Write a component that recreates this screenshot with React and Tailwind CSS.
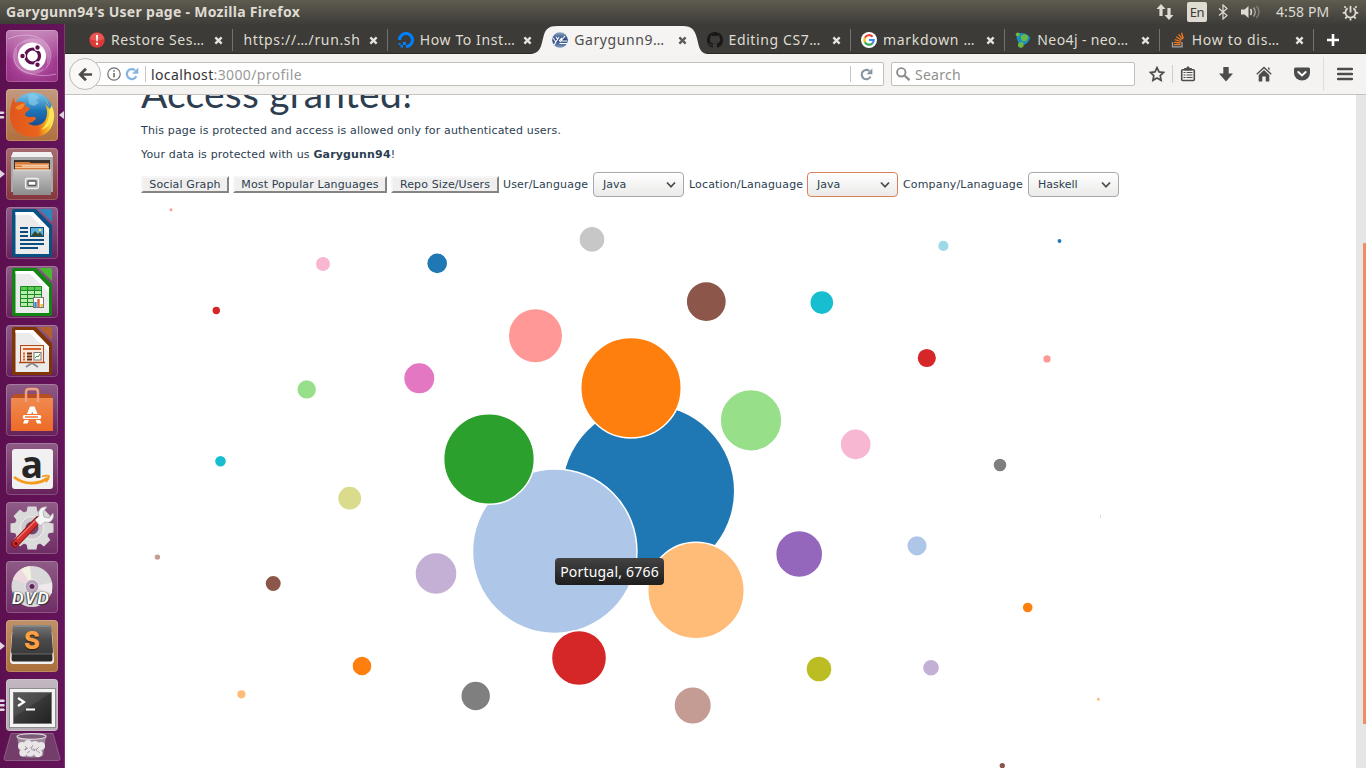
import React from "react";

const UI = "font-['Noto_Sans',sans-serif]";

/* ---------- launcher icons (52 x 52 tiles) ---------- */

const Dash = () => (
  <svg viewBox="0 0 52 52" className="size-full">
    <defs>
      <radialGradient id="dash" cx="0.5" cy="0.5" r="0.75">
        <stop offset="0" stopColor="#c676b6" />
        <stop offset="0.6" stopColor="#a23c91" />
        <stop offset="1" stopColor="#8f2a7c" />
      </radialGradient>
      <linearGradient id="dashTop" x1="0" y1="0" x2="0" y2="1">
        <stop offset="0" stopColor="#fff" stopOpacity="0.4" />
        <stop offset="1" stopColor="#fff" stopOpacity="0" />
      </linearGradient>
    </defs>
    <rect width="52" height="52" rx="4" fill="url(#dash)" />
    <rect width="52" height="30" rx="4" fill="url(#dashTop)" />
    <g fill="none" stroke="#f0d3ea" strokeOpacity="0.5" strokeWidth="1">
      <path d="M2 9C18 2 38 4 44 20c2 7 0 13-4 18" />
      <path d="M50 44C34 48 12 44 8 30c-1-7 1-12 5-16" />
    </g>
    <path d="M12 15C20 5 38 6 43 18q3 9-2 17 1-10-4-16-9-11-25-4z" fill="#fff" opacity="0.22" />
    <path d="M40 38C32 48 14 46 9 34q-3-8 2-17-1 10 4 16 9 11 25 5z" fill="#fff" opacity="0.22" />
    <circle cx="26" cy="26.500" r="14" fill="#fff" />
    <circle cx="26.500" cy="26" r="7" fill="none" stroke="#5e1050" strokeWidth="3.200" />
    <g fill="#5e1050" stroke="#fff" strokeWidth="1.200">
      <circle cx="16.500" cy="26" r="2.800" />
      <circle cx="31.500" cy="17.500" r="2.800" />
      <circle cx="31.500" cy="34.700" r="2.800" />
    </g>
  </svg>
);

const Firefox = () => (
  <svg viewBox="0 0 52 52" className="size-full">
    <defs>
      <linearGradient id="ffb" x1="0" y1="0" x2="0" y2="1">
        <stop offset="0" stopColor="#7cc9ee" />
        <stop offset="0.45" stopColor="#1e76b8" />
        <stop offset="1" stopColor="#123a7c" />
      </linearGradient>
      <linearGradient id="fff" x1="0" y1="0" x2="1" y2="0">
        <stop offset="0" stopColor="#e2571c" />
        <stop offset="0.65" stopColor="#e9641d" />
        <stop offset="0.85" stopColor="#f5b31d" />
        <stop offset="1" stopColor="#fbe14b" />
      </linearGradient>
    </defs>
    <circle cx="27" cy="23.500" r="20" fill="url(#ffb)" />
    <path d="M22 6c5-2 9 0 11 3l-3 2 3 3-5 3-5-2z" fill="#8fd0ee" opacity="0.6" />
    <path d="M8 8c0 4 1 5 2 6 3-2 7-1 9 0 0 3 2 4 5 5-1 3-5 4-5 7 1 2 4 2 7 2 3-1 4 1 4 2-2 1-3 4-8 4 5 4 12 3 16-1 4-5 4-12 1-18 5 4 9 11 8 18-1 9-10 15-20 15C13 48 4 39 4 27 4 19 6 12 8 8z" fill="url(#fff)" />
    <path d="M39 10c7 9 6 22-4 31 8-2 10-8 11-12-1 6-2 9-4 12 7-6 8-18 3-25 0 3-1 4-2 5 0-5-1-8-4-11z" fill="#fde65a" />
    <path d="M9 19c4-4 7-4 10-5-1 3-1 5-6 7z" fill="#f08a35" />
  </svg>
);

const Files = () => (
  <svg viewBox="0 0 52 52" className="size-full">
    <defs>
      <linearGradient id="cab" x1="0" y1="0" x2="0" y2="1">
        <stop offset="0" stopColor="#c6c6c6" />
        <stop offset="1" stopColor="#8c8c8c" />
      </linearGradient>
    </defs>
    <path d="M7 5h38l2 5v34H5V10z" fill="#a9a9a9" />
    <path d="M7 4h38l2 5H5z" fill="#f1f1f1" />
    <rect x="8" y="12" width="36" height="12" fill="#3c3230" />
    <path d="M9 14h14l2 1h18v8H9z" fill="#d77b3b" />
    <path d="M9 17h34M9 19.500h34" stroke="#f9c58c" strokeWidth="1.200" />
    <path d="M16 18h26" stroke="#fff5e8" strokeWidth="1" />
    <path d="M7 22h38v25H7z" fill="url(#cab)" />
    <path d="M7 22h38" stroke="#e3e3e3" />
    <rect x="19.500" y="30.500" width="13" height="10" rx="1.500" fill="#b5b5b5" stroke="#efefef" strokeWidth="1.300" />
    <rect x="22" y="33" width="8" height="4.500" rx="1" fill="#fff" stroke="#565656" strokeWidth="1.300" />
  </svg>
);

const DocShape = ({ dark, light, children }) => (
  <svg viewBox="0 0 52 52" className="size-full">
    <path d="M8 2h22l16 16.500V48q0 2-2 2H8q-2 0-2-2V4q0-2 2-2z" fill={dark} />
    <path d="M33 2h11q2 0 2 2v11z" fill={light} />
    <path d="M9.500 5h17.500L43 21.500V47H9.500z" fill="#ebebeb" />
    <path d="M9.500 5h17.500L43 21.500V27L24 8H9.500z" fill="#fff" />
    {children}
  </svg>
);

const Writer = () => (
  <DocShape dark="#0a5183" light="#2f86bd">
    <path d="M14 21h8M14 25h8M14 29h8M14 33h24M14 37h24M14 41h18" stroke="#0a4c7d" strokeWidth="2" />
    <rect x="24.500" y="20.500" width="13" height="9" fill="#5bb1dd" stroke="#0a4c7d" />
    <path d="M25 29l4-5 3 3 2-2 3 4z" fill="#35492f" />
    <circle cx="34" cy="23" r="1.300" fill="#ffe35e" />
  </DocShape>
);

const Calc = () => (
  <DocShape dark="#128512" light="#49b832">
    <rect x="14.500" y="20.500" width="21" height="20" fill="#b8ecb0" />
    <rect x="14.500" y="20.500" width="21" height="4" fill="#5bc953" />
    <path d="M14.500 20.500h21v20h-21zM14.500 24.500h21M14.500 28.500h21M14.500 32.500h21M14.500 36.500h21M21.500 20.500v20M28.500 20.500v20" fill="none" stroke="#1d8a1d" />
    <rect x="27.500" y="31.500" width="10" height="10" fill="#fff" stroke="#777" />
    <path d="M29.500 41v-5" stroke="#2a8be0" strokeWidth="2.400" />
    <path d="M32.500 41v-8" stroke="#e06030" strokeWidth="2.400" />
    <path d="M35.700 41v-3" stroke="#efc22f" strokeWidth="2.400" />
  </DocShape>
);

const Impress = () => (
  <DocShape dark="#7f3506" light="#b3602c">
    <rect x="14.500" y="20.500" width="23" height="17" fill="#fbe9de" stroke="#b04a14" />
    <path d="M17 24h18" stroke="#d2662c" strokeWidth="1.800" />
    <path d="M17 28.500h2M17 31.500h2M17 34.500h2" stroke="#d2662c" strokeWidth="2" />
    <path d="M21 28.500h5M21 31.500h5M21 34.500h5" stroke="#6b2b08" strokeWidth="2" />
    <rect x="28" y="27.500" width="7" height="7.500" fill="#fff" stroke="#777" />
    <path d="M29 33l2-2 1 1 2-3" fill="none" stroke="#32922c" />
    <path d="M13 37.500h26" stroke="#b04a14" strokeWidth="1.500" />
    <path d="M26 38l-6 4M26 38l6 4" stroke="#868686" strokeWidth="1.800" />
  </DocShape>
);

const Software = () => (
  <svg viewBox="0 0 52 52" className="size-full">
    <defs>
      <linearGradient id="bag" x1="0" y1="0" x2="0" y2="1">
        <stop offset="0" stopColor="#f08a50" />
        <stop offset="1" stopColor="#ee6a26" />
      </linearGradient>
    </defs>
    <path d="M8 10h36l3 5H5z" fill="#b84e22" />
    <path d="M5 14h42v33H5z" fill="url(#bag)" />
    <path d="M20 18V8q0-3 3-3h6q3 0 3 3v10" fill="none" stroke="#f2a27b" strokeWidth="2.400" />
    <path d="M17 39.500l7-17h4.500l7 17h-4.500l-4.700-12-4.800 12z" fill="#fff" />
    <rect x="16" y="30.500" width="20" height="5" rx="2.500" fill="#fff" stroke="#ee7434" strokeWidth="1.200" />
    <path d="M19 33h13" stroke="#ee7434" strokeWidth="1.300" />
  </svg>
);

const Amazon = () => (
  <div className="relative flex size-full items-center justify-center">
    <div className="flex h-[40px] w-[41px] items-start justify-center rounded-[3px] bg-[#f1f1f1]">
      <span className="-mt-[11px] font-['Open_Sans',sans-serif] text-[37px] font-bold leading-[51px] text-[#262626]">a</span>
    </div>
    <svg viewBox="0 0 52 52" className="absolute inset-0 size-full">
      <path d="M8 34c10 8 24 8 34 1" fill="none" stroke="#f59a1b" strokeWidth="2.800" />
      <path d="M36 33.500c3-1 5-1.500 7-.5 0 2-1 4-3 6" fill="none" stroke="#f59a1b" strokeWidth="1.800" />
    </svg>
  </div>
);

const Settings = () => (
  <svg viewBox="0 0 52 52" className="size-full">
    <g fill="#dadada">
      {[0, 45, 90, 135, 180, 225, 270, 315].map((a) => (
        <path key={a} d="M20 14l1.500-9.500h9L32 14z" transform={`rotate(${a} 26 26)`} />
      ))}
      <circle cx="26" cy="26" r="17.500" />
    </g>
    <circle cx="26" cy="26" r="11.500" fill="#cfcacf" stroke="#efefef" />
    <circle cx="26" cy="26" r="6.500" fill="#76456b" />
    <path d="M9 42L32 18" stroke="#8f1414" strokeWidth="7.500" strokeLinecap="round" />
    <path d="M9.500 41.500L31 19" stroke="#d32f2f" strokeWidth="5.500" strokeLinecap="round" />
    <path d="M11 37L29 19" stroke="#ee7a72" strokeWidth="1.200" />
    <circle cx="10" cy="41.500" r="1.500" fill="#5d0e0e" />
    <path d="M29 18l4-4c-2-5 2-10 8-9l-4 5 1 5 5 1 4-5c2 6-3 11-8 9l-5 4z" fill="#f5f5f5" stroke="#a4a4a4" strokeWidth="0.700" />
  </svg>
);

const Dvd = () => (
  <div className="relative size-full">
    <svg viewBox="0 0 52 52" className="absolute inset-0 size-full">
      <circle cx="26" cy="25.500" r="20.500" fill="#d9d9d9" />
      <path d="M26 25.500L7 18a20.500 20.500 0 0 1 8-10z" fill="#efd9df" />
      <path d="M26 25.500L15 8a20 20 0 0 1 9-3z" fill="#f3f1e2" />
      <path d="M26 25.500l20-4v11z" fill="#efe9ee" />
      <circle cx="26" cy="25.500" r="7" fill="#b7a4b8" stroke="#eee" />
      <circle cx="26" cy="25.500" r="3" fill="#5f2358" stroke="#fff" strokeWidth="0.600" />
    </svg>
    <span className="absolute left-[6px] top-[28px] font-['Liberation_Sans',sans-serif] text-[16px] font-bold italic leading-[19px] tracking-[1.5px] text-white [text-shadow:0_0_1px_#222,1px_1px_1px_#333,-1px_0_1px_#555]">
      DVD
    </span>
  </div>
);

const Sublime = () => (
  <div className="relative size-full">
    <svg viewBox="0 0 52 52" className="absolute inset-0 size-full">
      <defs>
        <linearGradient id="subl" x1="0" y1="0" x2="0" y2="1">
          <stop offset="0" stopColor="#777" />
          <stop offset="0.5" stopColor="#4a4a4a" />
          <stop offset="1" stopColor="#3c3c3c" />
        </linearGradient>
      </defs>
      <path d="M6 12L4 40q0 4 3 4h38q3 0 3-4L46 12z" fill="#f0f0f0" />
      <path d="M7 12L5.500 39q0 2.500 2 2.500h37q2 0 2-2.500L45 12z" fill="#2a2a2a" />
      <path d="M9 5h34q2 0 2.200 2L47 31q0 3-2 3H7q-2 0-2-3L6.800 7q.2-2 2.200-2z" fill="url(#subl)" />
      <path d="M8 6h36" stroke="#9c9c9c" />
      <path d="M6 34h40" stroke="#777" strokeWidth="0.800" />
    </svg>
    <span className="absolute left-[18px] top-[6px] font-['Inter',sans-serif] text-[24px] font-extrabold leading-[29px] text-[#fba043] [text-shadow:0_1px_1px_#3b1c00]">
      S
    </span>
  </div>
);

const Terminal = () => (
  <div className="flex size-full items-center justify-center pt-[5px]">
    <div className="flex h-[38px] w-[45px] items-start border-[3px] border-[#f4f4f4] bg-gradient-to-br from-[#515151] to-[#202020] outline-1 outline-[#8d8d8d]">
      <svg viewBox="0 0 39 32" className="h-[32px] w-[39px]">
        <path d="M0 0h39L0 26z" fill="#fff" opacity="0.08" />
        <rect x="0.500" y="0.500" width="38" height="31" fill="none" stroke="#777" />
        <path d="M5 6l6 4-6 4" fill="none" stroke="#fff" strokeWidth="2.200" />
        <path d="M13 17.500h9" stroke="#fff" strokeWidth="2" />
      </svg>
    </div>
  </div>
);

const Trash = () => (
  <svg viewBox="0 0 60 35" className="h-[35px] w-[60px]">
    <path d="M8 .5h42l7 25q0 2-2 2H3q-2 0-2-2z" fill="#733e6a" stroke="#8c5e85" />
    <path d="M14 3h29l-3 20q-11.500 3-23 0z" fill="#a18a9e" />
    <g fill="#e9e6e8">
      <circle cx="19" cy="13" r="4" />
      <circle cx="25" cy="11" r="4" />
      <circle cx="32" cy="12" r="4" />
      <circle cx="38" cy="13" r="4" />
      <circle cx="20" cy="20" r="3.600" />
      <circle cx="27" cy="19" r="4.500" />
      <circle cx="35" cy="20" r="4.300" />
    </g>
    <path d="M22 13l3 3M30 12l-2 4 4 2M36 14l-3 3 4 3M24 20l3-2" stroke="#a9a0a8" fill="none" />
    <ellipse cx="28.500" cy="3.500" rx="14.500" ry="2.800" fill="#7a5c77" stroke="#dcd5db" strokeWidth="1.200" />
  </svg>
);

const plain = "bg-gradient-to-b from-[#8e5b86] to-[#66215a]";

const launcher = [
  { icon: Dash, bg: "bg-[#8f2a7c]" },
  { icon: Firefox, bg: "bg-gradient-to-b from-[#c39a80] to-[#b06f3c]", marks: "two", active: true },
  { icon: Files, bg: "bg-gradient-to-b from-[#a56c72] to-[#84343c]", marks: "one" },
  { icon: Writer, bg: plain },
  { icon: Calc, bg: plain },
  { icon: Impress, bg: plain },
  { icon: Software, bg: plain },
  { icon: Amazon, bg: plain },
  { icon: Settings, bg: "bg-gradient-to-b from-[#8e5b86] to-[#702c65]" },
  { icon: Dvd, bg: "bg-gradient-to-b from-[#8e5b86] to-[#702c65]" },
  { icon: Sublime, bg: "bg-gradient-to-b from-[#c09068] to-[#ab6f3a]", marks: "one" },
  { icon: Terminal, bg: "bg-gradient-to-b from-[#c2b6c0] to-[#b9adb7]", marks: "three" },
];

const Marks = ({ kind }) => (
  <svg viewBox="0 0 5 16" className="h-[16px] w-[5px]" fill="#e0d5de">
    {kind === "one" && <path d="M0 4l5 4-5 4z" />}
    {kind === "two" && <path d="M0 4.500h3.500l1 1.200-1 1.300H0zM0 9h3.500l1 1.200-1 1.300H0z" />}
    {kind === "three" && <path d="M0 2.500h4l1 1.300L4 5H0zM0 7h4l1 1.300-1 1.200H0zM0 11.500h4l1 1.300L4 14H0z" />}
  </svg>
);

const Launcher = () => (
  <aside className="flex w-[65px] shrink-0 flex-col gap-[7px] overflow-hidden border-r border-[#7d3a72] bg-gradient-to-r from-[#5d1050] to-[#64145a] pt-[6px]">
    {launcher.map(({ icon: Icon, bg, marks, active }, i) => (
      <div key={i} className="flex h-[52px] shrink-0 items-center">
        <div className="w-[6px]">{marks && <Marks kind={marks} />}</div>
        <div className={`relative size-[52px] overflow-hidden rounded-[4px] ${bg}`}>
          <Icon />
          <div className="absolute inset-0 rounded-[4px] shadow-[inset_0_0_0_1px_rgba(255,255,255,0.2)]" />
        </div>
        {active && (
          <svg viewBox="0 0 6 10" className="h-[10px] w-[6px]" fill="#e0d5de">
            <path d="M6 1v8L1 5z" />
          </svg>
        )}
      </div>
    ))}
    <div className="-mt-[5px] pl-[3px]">
      <Trash />
    </div>
  </aside>
);

/* ---------- title bar ---------- */

const TitleBar = () => (
  <header className={`flex h-[24px] shrink-0 items-center bg-gradient-to-b from-[#5e5b50] to-[#3e3d39] pl-[6px] text-[#dfdbd2] ${UI}`}>
    <span className="whitespace-nowrap text-[14px] font-bold leading-none tracking-[0.29px]">
      Garygunn94's User page - Mozilla Firefox
    </span>
    <div className="ml-auto flex h-full items-center">
      <svg viewBox="0 0 18 18" className="h-[18px] w-[18px]" fill="#dfdbd2">
        <path d="M5 1l4.500 5H6.600v7H3.400V6H.5zM13 17l-4.500-5h2.900V5h3.200v7h2.900z" />
      </svg>
      <span className="ml-[13px] flex h-[20px] w-[20px] items-center justify-center rounded-[2px] bg-[#dfdbd2] text-[13px] leading-none tracking-[-0.3px] text-[#3c3b37]">
        En
      </span>
      <svg viewBox="0 0 10 16" className="ml-[11px] h-[16px] w-[10px]" fill="none" stroke="#dfdbd2" strokeWidth="1.200">
        <path d="M1 4.500l8 7L5 15V1l4 3.500-8 7" />
      </svg>
      <svg viewBox="0 0 20 16" className="ml-[13px] h-[16px] w-[20px]" fill="none" strokeWidth="1.500">
        <path d="M0 5.500h3.500L7.500 2v12l-4-3.500H0z" fill="#dfdbd2" />
        <path d="M9.500 5q2 3 0 6" stroke="#dfdbd2" />
        <path d="M12.500 3.500q3.500 4.500 0 9" stroke="#a3a097" />
        <path d="M15.500 2q5 6 0 12" stroke="#7f7c73" />
      </svg>
      <span className="ml-[15px] w-[54px] whitespace-nowrap text-[14px] leading-none tracking-[0.1px]">4:58 PM</span>
      <svg viewBox="0 0 18 18" className="ml-[12px] mr-[7px] h-[17px] w-[17px]" fill="none" stroke="#dfdbd2">
        <path d="M6 4.500a5.400 5.400 0 1 0 6 0" strokeWidth="1.900" />
        <path d="M9 2v7" strokeWidth="1.900" />
        <path d="M4 4L2.500 2.500M14 4l1.500-1.500M3.500 9.500H.8M14.500 9.500h2.700M5 13.500l-1.500 2M13 13.500l1.500 2M9 15v2.500" strokeWidth="1.900" />
      </svg>
    </div>
  </header>
);

/* ---------- tabs ---------- */

const RestoreIcon = () => (
  <svg viewBox="0 0 16 16" className="size-[16px]">
    <circle cx="8" cy="8" r="7.700" fill="#da3b38" />
    <path d="M1 7a7 6 0 0 1 14 0q-7 3-14 0z" fill="#ee6d68" opacity="0.600" />
    <path d="M7 3h2l-.3 6.200H7.300z" fill="#fff" />
    <circle cx="8" cy="11.700" r="1.200" fill="#fff" />
  </svg>
);
const OceanIcon = () => (
  <svg viewBox="0 0 16 16" className="size-[16px]" fill="#0080ff">
    <path d="M8 0a8 8 0 1 1 0 16v-3.100A4.900 4.900 0 1 0 3.100 8H0a8 8 0 0 1 8-8z" />
    <path d="M4.900 9.900H8V13H4.900zM2.500 13h2.400v2.400H2.500zM.6 11h1.900v2H.6z" />
  </svg>
);
const YiiIcon = () => (
  <svg viewBox="0 0 16 16" className="size-[16px]">
    <defs>
      <linearGradient id="yi" x1="0" y1="0" x2="0" y2="1">
        <stop offset="0" stopColor="#8fa5c4" />
        <stop offset="0.5" stopColor="#25437c" />
        <stop offset="1" stopColor="#7f9cc2" />
      </linearGradient>
    </defs>
    <circle cx="8" cy="8" r="7.800" fill="url(#yi)" />
    <path d="M1 6l3 4M7 5l-5 8M4 5l2 3M13 4l-5 6M7 9l3-3M9 9h6M7.500 11.500h7.500" stroke="#fff" strokeWidth="1.100" fill="none" />
  </svg>
);
const GithubIcon = () => (
  <svg viewBox="0 0 16 16" className="size-[16px]" fill="#191717">
    <path d="M8 0C3.580 0 0 3.580 0 8c0 3.540 2.290 6.530 5.470 7.590.4.070.55-.17.55-.38 0-.19-.01-.82-.01-1.490-2.010.37-2.530-.49-2.690-.94-.09-.23-.48-.94-.82-1.130-.28-.15-.68-.52-.01-.53.630-.01 1.080.58 1.230.82.72 1.210 1.870.87 2.330.66.070-.52.280-.87.510-1.070-1.780-.2-3.640-.89-3.640-3.950 0-.87.310-1.590.82-2.150-.08-.2-.36-1.020.08-2.120 0 0 .67-.21 2.200.82.640-.18 1.320-.27 2-.27s1.360.09 2 .27c1.530-1.040 2.200-.82 2.200-.82.440 1.100.16 1.920.08 2.120.51.56.82 1.270.82 2.150 0 3.070-1.870 3.750-3.650 3.950.29.25.54.73.54 1.480 0 1.070-.01 1.930-.01 2.200 0 .21.15.46.55.38A8.010 8.010 0 0 0 16 8c0-4.420-3.580-8-8-8z" />
  </svg>
);
const GoogleIcon = () => (
  <svg viewBox="0 0 16 16" className="size-[16px]" fill="none" strokeWidth="2.200">
    <circle cx="8" cy="8" r="8" fill="#fff" />
    <path d="M11.500 4.700A4.700 4.700 0 0 0 3.900 5.800" stroke="#ea4335" />
    <path d="M3.900 5.800a4.700 4.700 0 0 0 0 4.400" stroke="#fbbc05" />
    <path d="M3.900 10.200a4.700 4.700 0 0 0 7.200 1.400" stroke="#34a853" />
    <path d="M11.100 11.600A4.500 4.500 0 0 0 12.700 8H8" stroke="#4285f4" />
  </svg>
);
const NeoIcon = () => (
  <svg viewBox="0 0 16 16" className="size-[16px]">
    <path d="M2 2q7-3 12 2 2 5-5 9-7 0-7-11z" fill="#1590c4" />
    <circle cx="2.800" cy="2.500" r="2.100" fill="#6cb644" />
    <circle cx="9.500" cy="5.800" r="3.600" fill="#6cb644" />
    <circle cx="5.800" cy="12.800" r="2.900" fill="#6cb644" />
    <path d="M2.500 5q0 3 2 5M14 5q0 4-5 7" stroke="#1590c4" strokeWidth="1.800" fill="none" />
  </svg>
);
const StackIcon = () => (
  <svg viewBox="0 0 16 16" className="size-[16px]" fill="none">
    <path d="M2.500 10v4.800h9.500V10" stroke="#9fa6ab" strokeWidth="1.300" />
    <path d="M4 12.700h6.500M4.200 10.300l6.400.7M4.800 7.600l6.200 1.900M6.200 4.800l5.400 3.400M8.500 2.300l4 4.900M11.500.8l1.800 6" stroke="#f47a20" strokeWidth="1.300" />
  </svg>
);

const tabs = [
  { label: "Restore Ses…", icon: RestoreIcon, track: "tracking-[0.520px]" },
  { label: "https://…/run.sh", track: "tracking-[0.650px]" },
  { label: "How To Inst…", icon: OceanIcon, track: "tracking-[0.600px]" },
  { label: "Garygunn9…", icon: YiiIcon, track: "tracking-[0.600px]", active: true },
  { label: "Editing CS7…", icon: GithubIcon, track: "tracking-[0.600px]" },
  { label: "markdown …", icon: GoogleIcon, track: "tracking-[0.700px]" },
  { label: "Neo4j - neo…", icon: NeoIcon, track: "tracking-[0.380px]" },
  { label: "How to dis…", icon: StackIcon, track: "tracking-[0.700px]" },
];

const Close = ({ color }) => (
  <svg viewBox="0 0 10 10" className="size-[9px] shrink-0">
    <path d="M1.500 1.500l7 7M8.500 1.500l-7 7" stroke={color} strokeWidth="2.600" />
  </svg>
);

const TabStrip = () => (
  <div className={`flex h-[30px] shrink-0 border-b border-[#2b2a27] bg-[#3c3b37] pl-[14px] ${UI}`}>
    {tabs.map(({ label, icon: Icon, track, active }, i) => (
      <div key={label} className="relative h-[30px] w-[154.400px] shrink-0">
        {active && (
          <svg viewBox="0 0 174 29" className="absolute -left-[11px] top-[1px] h-[29px] w-[176px]" preserveAspectRatio="none">
            <path d="M0 29C10 28 10 20 12 13 14 4 17 1 26 1h124c9 0 12 4 14 12 2 7 2 15 10 16z" fill="#f5f4f2" />
          </svg>
        )}
        <div
          className={`relative mt-[4px] flex h-[24px] items-center pl-[10px] pr-[10px] ${
            active ? "text-[#4c4c4c]" : "text-[#dfdbd2]"
          }`}
        >
          {Icon && (
            <span className="mr-[6px] shrink-0">
              <Icon />
            </span>
          )}
          <span className={`flex-1 whitespace-nowrap text-[14px] leading-none ${track}`}>{label}</span>
          <Close color={active ? "#5b5b59" : "#e6e3dd"} />
        </div>
        {!active && i !== 2 && <span className="absolute right-0 top-[5px] h-[22px] w-px bg-[#74726d]" />}
      </div>
    ))}
    <svg viewBox="0 0 14 14" className="ml-[12px] mt-[9px] size-[14px]">
      <path d="M7 1v12M1 7h12" stroke="#fff" strokeWidth="2.600" />
    </svg>
  </div>
);

/* ---------- navigation toolbar ---------- */

const Reload = ({ color, className }) => (
  <svg viewBox="0 0 14 14" className={className}>
    <path d="M11.300 9.300A5 5 0 1 1 10 3.200" fill="none" stroke={color} strokeWidth="2.300" />
    <path d="M13.300.5v6.300H7z" fill={color} />
  </svg>
);

const Toolbar = () => (
  <div className={`flex h-[41px] shrink-0 items-center border-b border-[#c6c3bf] bg-[#f4f3f1] pl-[4px] ${UI}`}>
    <div className="z-10 flex size-[32px] shrink-0 items-center justify-center rounded-full border border-[#bdbab6] bg-[#f9f8f7]">
      <svg viewBox="0 0 16 16" className="size-[15px]" fill="none" stroke="#4c4c4c" strokeWidth="2.900">
        <path d="M15 8H3M8.500 1.800L2.300 8l6.200 6.200" />
      </svg>
    </div>
    <div className="-ml-[5px] flex h-[24px] w-[788px] shrink-0 items-center rounded-r-[2px] border border-[#c2bfbb] bg-white pl-[10px]">
      <svg viewBox="0 0 14 14" className="size-[14px]" fill="none" stroke="#6e6e6e">
        <circle cx="7" cy="7" r="6.200" strokeWidth="1.200" />
        <path d="M7 6v4.500M7 3.300v1.500" strokeWidth="1.600" />
      </svg>
      <Reload color="#86b5e4" className="ml-[4px] size-[14px]" />
      <span className="ml-[6px] h-[16px] w-px bg-[#c6c6c6]" />
      <span className="ml-[5px] whitespace-nowrap pt-[2px] text-[14px] leading-none tracking-[0.380px] text-[#999]">
        <span className="text-[#333]">localhost</span>:3000/profile
      </span>
      <span className="ml-auto h-[16px] w-px bg-[#c6c6c6]" />
      <Reload color="#8794a0" className="ml-[9px] mr-[10px] size-[13px]" />
    </div>
    <div className="ml-[7px] flex h-[24px] w-[244px] shrink-0 items-center rounded-[2px] border border-[#c2bfbb] bg-white pl-[4px]">
      <svg viewBox="0 0 14 14" className="size-[14px]" fill="none" stroke="#8b8b8b">
        <circle cx="5.300" cy="5.300" r="4.200" strokeWidth="1.900" />
        <path d="M8.500 8.500l5 4.700" strokeWidth="2.300" />
      </svg>
      <span className="ml-[5px] pt-[2px] text-[14px] leading-none tracking-[0.25px] text-[#8f8f8f]">Search</span>
    </div>
    <svg viewBox="0 0 16 16" className="ml-[14px] size-[16px]" fill="none" stroke="#4c4c4c" strokeWidth="1.700">
      <path d="M8 1.700l2 4.200 4.500.5-3.300 3.200.9 4.700L8 12l-4.100 2.300.9-4.700L1.500 6.400 6 5.900z" />
    </svg>
    <span className="ml-[7px] h-[18px] w-px bg-[#d0cecb]" />
    <svg viewBox="0 0 16 16" className="ml-[7px] size-[16px]" fill="none" stroke="#4c4c4c">
      <path d="M4.500 4V2.500h2Q7 .8 8 .8t1.500 1.700h2V4z" fill="#4c4c4c" />
      <rect x="1.700" y="3.700" width="12.600" height="10.800" rx="1" strokeWidth="1.600" />
      <path d="M3.500 6.500h2M3.500 9h2M3.500 11.500h2M6.500 6.500h6M6.500 9h6M6.500 11.500h6" strokeWidth="1.100" />
    </svg>
    <svg viewBox="0 0 14 16" className="ml-[23px] h-[16px] w-[14px]" fill="#4c4c4c">
      <path d="M4.300 1h5.400v6.500H14L7 15.500 0 7.500h4.300z" />
    </svg>
    <svg viewBox="0 0 16 16" className="ml-[23px] size-[16px]" fill="#4c4c4c">
      <path d="M8 .5l7.700 7.300-.9 1L8 2.600 1.200 8.800l-.9-1zM2.700 9L8 4.100 13.300 9v6.500H9.700v-5H6.300v5H2.700zM12 1.500h1.500v3L12 3.100z" />
    </svg>
    <svg viewBox="0 0 16 16" className="ml-[22px] size-[16px]">
      <path d="M1.500 1.500h13q1.500 0 1.500 1.500v4a8 7.500 0 0 1-16 0V3q0-1.500 1.500-1.500z" fill="#4c4c4c" />
      <path d="M4.300 6L8 9.500 11.700 6" fill="none" stroke="#fff" strokeWidth="1.900" strokeLinecap="round" />
    </svg>
    <span className="ml-[13px] h-[34px] w-px bg-[#e0deda]" />
    <svg viewBox="0 0 16 14" className="ml-[13px] h-[14px] w-[16px]">
      <path d="M1 2h14M1 7h14M1 12h14" stroke="#4c4c4c" strokeWidth="2.400" strokeLinecap="round" />
    </svg>
  </div>
);

/* ---------- page ---------- */

const bubbles = [
  [648.3, 491, 85.7, "#1f77b4"],
  [554.7, 551.2, 81.5, "#aec7e8"],
  [631, 387.7, 49.5, "#ff7f0e"],
  [696, 590.5, 47.5, "#ffbb78"],
  [489, 459, 44.6, "#2ca02c"],
  [751, 420.3, 30.1, "#98df8a"],
  [579, 658, 26.8, "#d62728"],
  [535.5, 335.8, 26.5, "#ff9896"],
  [799.2, 554, 22.8, "#9467bd"],
  [436, 573.5, 20.3, "#c5b0d5"],
  [706.3, 301.6, 19.4, "#8c564b"],
  [692.7, 705.5, 18, "#c49c94"],
  [419.3, 378.3, 15, "#e377c2"],
  [855.7, 444.4, 14.8, "#f7b6d2"],
  [475.7, 696, 14.2, "#7f7f7f"],
  [592, 239.4, 12.3, "#c7c7c7"],
  [819, 669, 12.3, "#bcbd22"],
  [349.7, 498.2, 11.4, "#dbdb8d"],
  [821.8, 302.6, 11.3, "#17becf"],
  [943.4, 245.9, 5.1, "#9edae5"],
  [437.2, 263.4, 9.8, "#1f77b4"],
  [917, 545.8, 9.6, "#aec7e8"],
  [362, 666, 9.3, "#ff7f0e"],
  [241.4, 694.3, 4.1, "#ffbb78"],
  [306.7, 389.4, 9.2, "#98df8a"],
  [926.8, 358, 9.1, "#d62728"],
  [931, 667.8, 7.8, "#c5b0d5"],
  [273.2, 583.5, 7.5, "#8c564b"],
  [323, 264, 7, "#f7b6d2"],
  [1000, 465, 6.3, "#7f7f7f"],
  [220.5, 461.3, 5.3, "#17becf"],
  [1027.7, 607.5, 4.8, "#ff7f0e"],
  [216.3, 310.5, 3.7, "#d62728"],
  [1047, 358.9, 3.6, "#ff9896"],
  [157.4, 557.1, 2.7, "#c49c94"],
  [1002.3, 765.6, 2.7, "#8c564b"],
  [1059.5, 241, 1.9, "#1f77b4"],
  [1098.3, 699.2, 1.5, "#ffbb78"],
  [171, 209.8, 1.5, "#ff9896"],
];

const OldButton = ({ children, width }) => (
  <button
    className={`h-[17px] shrink-0 whitespace-nowrap border-2 border-b-[#858585] border-l-[#f6f6f6] border-r-[#858585] border-t-[#f6f6f6] bg-[#f0efee] p-0 text-center text-[11px] leading-[13px] tracking-[0.13px] ${width}`}
  >
    {children}
  </button>
);

const Picker = ({ value, focused }) => (
  <div
    className={`flex h-[25px] w-[91px] shrink-0 items-center justify-between rounded-[4px] border bg-gradient-to-b from-white to-[#ebeae9] pl-[9px] pr-[7px] tracking-normal ${
      focused ? "border-[#d9805c]" : "border-[#a9a9a9]"
    }`}
  >
    <span className="text-[11px]">{value}</span>
    <svg viewBox="0 0 10 8" className="h-[8px] w-[10px]">
      <path d="M1 1.500l4 4.300 4-4.300" fill="none" stroke="#4c4c4c" strokeWidth="1.800" />
    </svg>
  </div>
);

const Page = () => (
  <main className="flex min-h-0 flex-1 bg-white">
    <div className="relative flex min-w-0 flex-1 flex-col overflow-hidden font-['DejaVu_Sans',sans-serif] text-[11px] leading-[16px] tracking-[0.165px] text-[#2c3e50]">
      <div className="-mt-[26px] flex flex-col pl-[76px]">
        <h1 className="h-[54px] whitespace-nowrap font-['Lato',sans-serif] text-[39px] leading-[48px] tracking-[0.2px]">
          Access granted!
        </h1>
        <p className="h-[24px]">This page is protected and access is allowed only for authenticated users.</p>
        <p className="h-[25px]">
          Your data is protected with us <strong>Garygunn94</strong>!
        </p>
        <div className="flex h-[25px] items-center">
          <OldButton width="w-[88px]">Social Graph</OldButton>
          <OldButton width="w-[154px] ml-[4px]">Most Popular Languages</OldButton>
          <OldButton width="w-[108px] ml-[4px]">Repo Size/Users</OldButton>
          <span className="ml-[4px] w-[90px] shrink-0 whitespace-nowrap">User/Language</span>
          <Picker value="Java" />
          <span className="ml-[5px] w-[118px] shrink-0 whitespace-nowrap">Location/Lanaguage</span>
          <Picker value="Java" focused />
          <span className="ml-[5px] w-[125px] shrink-0 whitespace-nowrap">Company/Lanaguage</span>
          <Picker value="Haskell" />
        </div>
      </div>
      <svg viewBox="65 197 1291 571" className="h-[571px] w-[1291px] shrink-0">
        {bubbles.map(([x, y, r, fill]) => (
          <circle key={`${x}-${y}`} cx={x} cy={y} r={r + 0.75} fill={fill} stroke="#fff" strokeWidth="1.500" />
        ))}
        <path d="M1100.500 515v3" stroke="#c7c7c7" strokeWidth="0.600" />
      </svg>
      <div
        className={`absolute left-[490px] top-[463px] flex h-[27px] w-[109px] items-center justify-center whitespace-nowrap rounded-[4px] bg-gradient-to-b from-[#434343] to-[#1e1e1e] text-[14px] leading-none tracking-[0.2px] text-white ${UI}`}
      >
        Portugal, 6766
      </div>
    </div>
    <div className="flex w-[10px] shrink-0 justify-end bg-[#e6e6e6] pt-[148px]">
      <div className="h-[481px] w-[3px] rounded-l-[1px] bg-[#f08c64]" />
    </div>
  </main>
);

export default function App() {
  return (
    <div className="flex h-[768px] w-[1366px] flex-col overflow-hidden">
      <TitleBar />
      <div className="flex min-h-0 flex-1">
        <Launcher />
        <div className="flex min-w-0 flex-1 flex-col">
          <TabStrip />
          <Toolbar />
          <Page />
        </div>
      </div>
    </div>
  );
}
